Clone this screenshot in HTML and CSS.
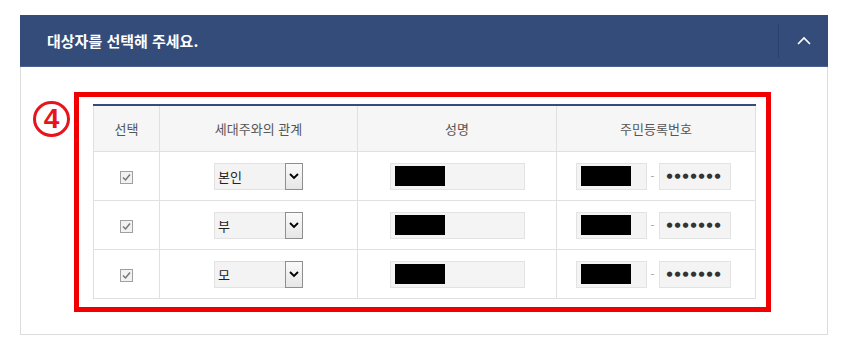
FILE: index.html
```html
<!DOCTYPE html>
<html lang="ko">
<head>
    <meta charset="UTF-8">
    <meta name="viewport" content="width=device-width, initial-scale=1.0">
    <title>대상자 선택</title>
    <link rel="stylesheet" href="styles.css">
</head>
<body>
    <div class="page">
        <div class="panel">
            <div class="panel-head">
                <h2 class="panel-title">대상자를 선택해 주세요.</h2>
                <button class="toggle" type="button" aria-label="접기">
                    <svg width="14" height="9" viewBox="0 0 14 9"><path d="M1 8 L7 2 L13 8" fill="none" stroke="#fff" stroke-width="1.6"/></svg>
                </button>
            </div>
            <div class="panel-body">
                <div class="marker">4</div>
                <div class="highlight">
                    <table class="target-table">
                        <colgroup>
                            <col style="width:66px">
                            <col style="width:198px">
                            <col style="width:199px">
                            <col style="width:199px">
                        </colgroup>
                        <thead>
                            <tr>
                                <th>선택</th>
                                <th>세대주와의 관계</th>
                                <th>성명</th>
                                <th>주민등록번호</th>
                            </tr>
                        </thead>
                        <tbody>
                            <tr>
                                <td><span class="check"><svg width="13" height="13" viewBox="0 0 13 13"><rect x="0.5" y="0.5" width="12" height="12" fill="#f2f2f2" stroke="#a0a0a0"/><path d="M3 6.5 L5.5 9 L10 3.5" fill="none" stroke="#777" stroke-width="1.5"/></svg></span></td>
                                <td><div class="select"><span class="select-text">본인</span><span class="select-arrow"><svg width="10" height="7" viewBox="0 0 10 7"><path d="M1 1 L5 5 L9 1" fill="none" stroke="#000" stroke-width="1.8"/></svg></span></div></td>
                                <td><div class="field name"><span class="masked"></span></div></td>
                                <td>
                                    <div class="rrn">
                                        <div class="field front"><span class="masked"></span></div>
                                        <span class="dash">-</span>
                                        <div class="field back">●●●●●●●</div>
                                    </div>
                                </td>
                            </tr>
                            <tr>
                                <td><span class="check"><svg width="13" height="13" viewBox="0 0 13 13"><rect x="0.5" y="0.5" width="12" height="12" fill="#f2f2f2" stroke="#a0a0a0"/><path d="M3 6.5 L5.5 9 L10 3.5" fill="none" stroke="#777" stroke-width="1.5"/></svg></span></td>
                                <td><div class="select"><span class="select-text">부</span><span class="select-arrow"><svg width="10" height="7" viewBox="0 0 10 7"><path d="M1 1 L5 5 L9 1" fill="none" stroke="#000" stroke-width="1.8"/></svg></span></div></td>
                                <td><div class="field name"><span class="masked"></span></div></td>
                                <td>
                                    <div class="rrn">
                                        <div class="field front"><span class="masked"></span></div>
                                        <span class="dash">-</span>
                                        <div class="field back">●●●●●●●</div>
                                    </div>
                                </td>
                            </tr>
                            <tr>
                                <td><span class="check"><svg width="13" height="13" viewBox="0 0 13 13"><rect x="0.5" y="0.5" width="12" height="12" fill="#f2f2f2" stroke="#a0a0a0"/><path d="M3 6.5 L5.5 9 L10 3.5" fill="none" stroke="#777" stroke-width="1.5"/></svg></span></td>
                                <td><div class="select"><span class="select-text">모</span><span class="select-arrow"><svg width="10" height="7" viewBox="0 0 10 7"><path d="M1 1 L5 5 L9 1" fill="none" stroke="#000" stroke-width="1.8"/></svg></span></div></td>
                                <td><div class="field name"><span class="masked"></span></div></td>
                                <td>
                                    <div class="rrn">
                                        <div class="field front"><span class="masked"></span></div>
                                        <span class="dash">-</span>
                                        <div class="field back">●●●●●●●</div>
                                    </div>
                                </td>
                            </tr>
                        </tbody>
                    </table>
                </div>
            </div>
        </div>
    </div>
</body>
</html>
```

FILE: styles.css
```css
body {
    margin: 0;
    background-color: #fff;
    font-family: "Noto Sans CJK KR", "Noto Sans", sans-serif;
}

.page {
    padding: 15px 18px 0 20px;
}

.panel {
    width: 808px;
    box-sizing: border-box;
    border: 1px solid #dcdcdc;
    border-top: none;
}

.panel-head {
    display: flex;
    align-items: center;
    height: 52px;
    margin: 0 -1px;
    padding-left: 27px;
    background-color: #344c7a;
    border-bottom: 1px solid #4a6090;
    box-sizing: border-box;
}

.panel-title {
    margin: 0;
    color: #fff;
    font-size: 15px;
    font-weight: bold;
}

.toggle {
    margin-left: auto;
    width: 50px;
    height: 34px;
    padding: 0;
    background: none;
    border: none;
    border-left: 1px solid #2c416a;
    display: flex;
    align-items: center;
    justify-content: center;
    cursor: pointer;
}

.panel-body {
    display: flex;
    align-items: flex-start;
    padding: 25px 0 22px 12px;
}

.marker {
    width: 37px;
    height: 36px;
    margin-top: 9px;
    margin-right: 4px;
    border: 3px solid #e8141b;
    border-radius: 50%;
    box-sizing: border-box;
    color: #e8141b;
    font-family: "Liberation Sans", sans-serif;
    font-size: 28px;
    font-weight: bold;
    line-height: 30px;
    text-align: center;
}

.highlight {
    width: 697px;
    box-sizing: border-box;
    border: 5px solid #f00000;
    padding: 7px 11px 8px 14px;
}

.target-table {
    width: 662px;
    border-collapse: collapse;
    table-layout: fixed;
    border-top: 2px solid #344c7a;
}

.target-table th,
.target-table td {
    border: 1px solid #e0e0e0;
    text-align: center;
    padding: 0;
}

.target-table th {
    height: 45px;
    background-color: #f6f6f6;
    color: #555;
    font-size: 13px;
    font-weight: normal;
}

.target-table td {
    height: 48px;
}

.check {
    display: block;
    width: 13px;
    height: 13px;
    margin: 2px auto 0;
    line-height: 0;
}

.select {
    display: inline-flex;
    width: 89px;
    height: 27px;
    box-sizing: border-box;
    background-color: #f3f3f3;
    border: 1px solid #e2e2e2;
    vertical-align: middle;
}

.select-text {
    flex: 1;
    padding-left: 3px;
    text-align: left;
    font-size: 13px;
    line-height: 25px;
    color: #222;
}

.select-arrow {
    width: 16px;
    margin: -1px -1px -1px 0;
    border: 1px solid #8f8f8f;
    background: linear-gradient(#fafafa, #e6e6e6);
    display: flex;
    align-items: center;
    justify-content: center;
}

.field {
    height: 27px;
    box-sizing: border-box;
    background-color: #f4f4f4;
    border: 1px solid #e3e3e3;
    display: flex;
    align-items: center;
    padding-left: 4px;
}

.field.name {
    width: 135px;
    margin: 0 auto;
}

.masked {
    width: 50px;
    height: 20px;
    background-color: #000;
}

.rrn {
    display: flex;
    align-items: center;
    justify-content: center;
    padding-right: 6px;
}

.field.front {
    width: 71px;
}

.dash {
    width: 12px;
    color: #999;
    font-size: 11px;
    text-align: center;
}

.field.back {
    width: 72px;
    padding-left: 7px;
    color: #333;
    font-family: "DejaVu Sans", sans-serif;
    font-size: 7px;
    letter-spacing: 1.9px;
}
```
